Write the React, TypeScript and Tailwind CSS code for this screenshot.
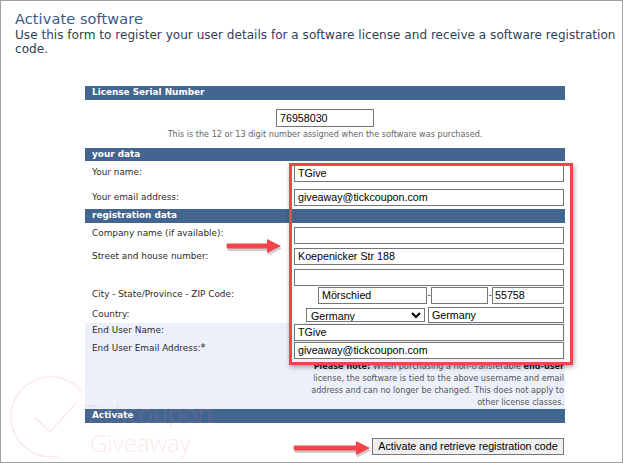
import React from "react";

const V = "font-['DejaVu_Sans',sans-serif]";
const inp = "block h-[17px] border border-[#767676] bg-white px-[3px] pb-[1px] text-[10.7px] leading-[15px] text-black font-['Liberation_Sans',sans-serif] outline-none";

function Bar({ children, h = "h-[14px]" }: { children: React.ReactNode; h?: string }) {
  return (
    <div className={`${h} bg-[#426690] pl-[7px] text-[8.9px] leading-[12px] font-bold text-white`}>{children}</div>
  );
}

function Row({ label, h, children }: { label?: React.ReactNode; h: string; children?: React.ReactNode }) {
  return (
    <div className={`flex ${h} justify-between`}>
      <div className="pl-[7px] text-[8.9px] leading-[13px] text-[#2b2b2b]">{label}</div>
      <div className="w-[270px] shrink-0 mr-[1px]">{children}</div>
    </div>
  );
}

function Arrow({ className, len }: { className: string; len: number }) {
  const neck = len - 14;
  const d = `M1 5.5 H${neck} V1 L${len} 8 L${neck} 15 V10.5 H1 Q0 8 1 5.5 Z`;
  return (
    <svg className={`absolute ${className}`} width={len + 4} height="20" viewBox={`0 0 ${len + 4} 20`}>
      <path d={d} fill="#000" opacity="0.2" transform="translate(1,2.5)" />
      <path d={d} fill="#f4434a" />
    </svg>
  );
}

export default function App() {
  return (
    <div className={`relative w-[623px] h-[463px] overflow-hidden bg-white border border-[#a0a0a0] ${V}`}>
      <div className="pl-[14px] pt-[9px] w-[616px]">
        <h1 className="text-[14.5px] leading-[19px] text-[#3a5a86] tracking-[0.1px]">Activate software</h1>
        <p className="text-[12.08px] leading-[13.5px] text-[#2f3f55]">
          Use this form to register your user details for a software license and receive a software registration code.
        </p>
      </div>

      <div className="ml-[84px] mt-[30px] w-[480px]">
        <Bar>License Serial Number</Bar>
        <div className="flex justify-center pt-[9px]">
          <input readOnly value="76958030" className={`${inp} w-[98px] !h-[18px] !pb-0`} />
        </div>
        <div className="mt-[2px] h-[19px] text-center text-[8.1px] leading-[11px] text-[#666]">
          This is the 12 or 13 digit number assigned when the software was purchased.
        </div>
        <Bar h="h-[13px]">your data</Bar>
        <Row label={<span className="block pt-[5px]">Your name:</span>} h="h-[25px]">
          <input readOnly value="TGive" className={`${inp} w-full mt-[3px] !h-[18px]`} />
        </Row>
        <Row label={<span className="block pt-[5px]">Your email address:</span>} h="h-[23px]">
          <input readOnly value="giveaway@tickcoupon.com" className={`${inp} w-full mt-[3px]`} />
        </Row>
        <Bar>registration data</Bar>
        <Row label={<span className="block pt-[4px]">Company name (if available):</span>} h="h-[25px]">
          <input readOnly className={`${inp} w-full mt-[4px]`} />
        </Row>
        <Row label={<span className="block pt-[2px]">Street and house number:</span>} h="h-[21px]">
          <input readOnly value="Koepenicker Str 188" className={`${inp} w-full`} />
        </Row>
        <Row h="h-[18px]">
          <input readOnly className={`${inp} w-full`} />
        </Row>
        <Row label={<span className="block pt-[1px]">City - State/Province - ZIP Code:</span>} h="h-[20px]">
          <div className="flex items-center justify-end text-[9px] text-[#333]">
            <input readOnly value="Mörschied" className={`${inp} w-[109px]`} />
            <span className="w-[4px] text-center">-</span>
            <input readOnly className={`${inp} w-[57px]`} />
            <span className="w-[4px] text-center">-</span>
            <input readOnly value="55758" className={`${inp} w-[72px] !px-[2px]`} />
          </div>
        </Row>
        <Row label={<span className="block pt-[1px]">Country:</span>} h="h-[16px]">
          <div className="flex justify-end gap-[3px]">
            <select className={`${inp} w-[119px] !h-[14px] mt-[1px] !px-0 !pb-0 !leading-[12px]`} defaultValue="Germany">
              <option>Germany</option>
            </select>
            <input readOnly value="Germany" className={`${inp} w-[136px] !h-[16px] !leading-[14px]`} />
          </div>
        </Row>
        <div className="bg-[#ebf0fb] h-[86px]">
          <Row label={<span className="block pt-[1px]">End User Name:</span>} h="h-[18px]">
            <input readOnly value="TGive" className={`${inp} w-full mt-[1px]`} />
          </Row>
          <Row label={<span className="block pt-[1px]">End User Email Address:<span className="text-[10px] leading-[10px]">*</span></span>} h="h-[18px]">
            <input readOnly value="giveaway@tickcoupon.com" className={`${inp} w-full mt-[1px]`} />
          </Row>
          <p className="ml-auto mt-[1px] mr-[1px] w-[262px] text-right text-[8.1px] leading-[12px] text-[#555]">
            <b className="text-[#222]">Please note:</b> When purchasing a non-transferable <b className="text-[#222]">end-user</b> license, the software is tied to the above username and email address and can no longer be changed. This does not apply to other license classes.
          </p>
        </div>
        <Bar>Activate</Bar>
        <div className="flex justify-end pt-[15px] pr-[1px]">
          <button className="h-[17px] w-[192px] border border-[#767676] bg-[#efefef] text-[10.7px] leading-[15px] text-black font-['Liberation_Sans',sans-serif] whitespace-nowrap">
            Activate and retrieve registration code
          </button>
        </div>
      </div>

      {/* annotations over the page */}
      <div className="absolute left-[288px] top-[162px] h-[202px] w-[284px] border-[3px] border-[#f4434a] shadow-[1px_2px_5px_rgba(0,0,0,0.35)]" />
      <Arrow className="left-[225px] top-[237px]" len={55} />
      <Arrow className="left-[292px] top-[439px]" len={77} />

      {/* watermark */}
      <div className="pointer-events-none absolute left-[5px] top-[374px]">
        <svg width="84" height="84" viewBox="0 0 84 84" fill="none" stroke="#f08080" strokeOpacity="0.2" strokeWidth="1.2">
          <path d="M77 18 A40 40 0 1 0 53 81" />
          <path d="M28 42 L44 57 L70 28" />
        </svg>
      </div>
      <div className="pointer-events-none absolute left-[83px] top-[398px] text-[25px] leading-[29px] font-light text-[#f08080]/20 font-['Open_Sans',sans-serif]">
        <div>Tickcoupon</div>
        <div className="pl-[6px] text-[24px]">Giveaway</div>
      </div>
    </div>
  );
}
